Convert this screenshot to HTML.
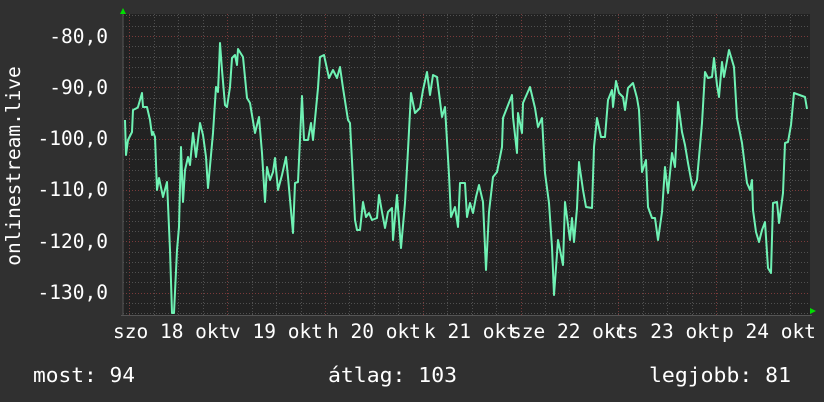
<!DOCTYPE html>
<html><head><meta charset="utf-8"><style>
html,body{margin:0;padding:0;background:#303030;}
svg{display:block;}
text{font-family:"DejaVu Sans Mono","Liberation Mono",monospace;fill:#ffffff;}
</style></head><body>
<svg width="824" height="402" viewBox="0 0 824 402" xmlns="http://www.w3.org/2000/svg">
<rect width="824" height="402" fill="#303030"/>
<rect x="123" y="14" width="687" height="301" fill="#222222"/>
<path stroke="#505050" stroke-width="1" stroke-dasharray="1,2" fill="none" d="
M123 15.5H810 M123 26.5H810 M123 46.5H810 M123 57.5H810 M123 67.5H810 M123 77.5H810
M123 98.5H810 M123 108.5H810 M123 118.5H810 M123 128.5H810
M123 149.5H810 M123 159.5H810 M123 170.5H810 M123 180.5H810
M123 200.5H810 M123 211.5H810 M123 221.5H810 M123 231.5H810
M123 252.5H810 M123 262.5H810 M123 272.5H810 M123 282.5H810
M123 303.5H810 M123 313.5H810
M154.5 14V315 M178.5 14V315 M203.5 14V315
M252.5 14V315 M276.5 14V315 M301.5 14V315
M349.5 14V315 M374.5 14V315 M398.5 14V315
M447.5 14V315 M472.5 14V315 M496.5 14V315
M545.5 14V315 M569.5 14V315 M594.5 14V315
M643.5 14V315 M667.5 14V315 M692.5 14V315
M741.5 14V315 M765.5 14V315 M790.5 14V315"/>
<path stroke="#7a3a3a" stroke-width="1" stroke-dasharray="1,2" fill="none" d="
M123 36.5H810 M123 87.5H810 M123 139.5H810 M123 190.5H810 M123 241.5H810 M123 293.5H810
M129.5 14V315 M227.5 14V315 M325.5 14V315 M423.5 14V315 M521.5 14V315 M618.5 14V315 M716.5 14V315"/>
<line x1="123" y1="12" x2="123" y2="316" stroke="#555" stroke-width="1"/>
<line x1="121" y1="315.5" x2="812" y2="315.5" stroke="#555" stroke-width="1"/>
<polygon points="120,14 126,14 123,8" fill="#00dd00"/>
<polygon points="810,308 810,314 816,311" fill="#00dd00"/>
<polyline fill="none" stroke="#6ff2b4" stroke-width="2" stroke-linejoin="round" points="
125,120 126,155 128,140 132,132 133,110 137,108 138,107 142,93 143,107 147,107 150,120 152,135 153,132 155,137 157,190 159,178 163,197 167,182 170,250 172,313 174,313 177,250 179,227 181,147 183,202 185,170 188,157 190,165 193,133 196,157 200,123 203,135 206,157 208,188 213,133 216,87 218,92 220,43 222,70 225,105 227,107 230,87 232,58 235,55 237,65 238,49 243,57 247,98 250,103 255,133 259,117 262,153 265,202 267,167 270,180 273,172 275,158 278,190 282,175 286,157 288,177 292,222 293,233 295,183 298,182 302,96 304,140 308,140 311,123 313,140 318,88 320,57 324,55 329,78 333,70 337,78 340,67 343,88 348,120 350,123 353,180 355,220 357,230 360,230 363,202 366,217 369,213 372,220 377,218 379,195 382,212 385,228 388,212 392,208 393,240 397,195 401,248 405,203 408,150 411,93 415,113 420,108 423,90 427,72 430,95 433,75 437,77 442,117 445,107 449,175 451,217 455,207 458,227 460,183 465,183 467,217 470,203 473,213 476,197 479,185 483,202 486,270 489,212 493,177 497,172 502,147 503,118 512,95 513,117 517,153 518,113 522,133 523,103 530,87 535,108 538,127 542,118 545,173 549,203 552,247 554,295 558,240 563,265 565,202 570,240 572,218 574,242 577,208 579,162 583,190 586,207 592,208 594,147 597,118 601,137 605,137 608,100 612,90 613,107 616,81 619,93 623,97 625,110 628,88 633,83 637,98 639,110 642,172 646,160 648,207 652,218 655,218 658,240 662,212 665,167 668,193 672,153 675,167 677,127 678,102 682,132 685,145 688,163 693,190 697,180 702,123 705,72 708,78 712,77 714,58 717,85 719,97 722,62 724,77 729,50 734,67 737,118 742,143 747,183 750,190 752,180 753,210 756,232 759,242 762,230 765,222 768,268 771,273 773,203 777,202 779,223 783,193 785,143 788,142 791,125 794,93 805,97 807,109"/>
<g font-size="19.5" text-anchor="end">
<text x="108" y="43">-80,0</text>
<text x="108" y="94">-90,0</text>
<text x="108" y="145">-100,0</text>
<text x="108" y="196">-110,0</text>
<text x="108" y="248">-120,0</text>
<text x="108" y="299">-130,0</text>
</g>
<text font-size="19.5" transform="translate(20,166) rotate(-90)" text-anchor="middle">onlinestream.live</text>
<g font-size="19.5">
<text x="113" y="338">szo 18 okt</text>
<text x="229" y="338">v 19 okt</text>
<text x="327" y="338">h 20 okt</text>
<text x="424" y="338">k 21 okt</text>
<text x="510" y="338">sze 22 okt</text>
<text x="615" y="338">cs 23 okt</text>
<text x="722" y="338">p 24 okt</text>
</g>
<g font-size="20">
<text x="33" y="382" textLength="102" lengthAdjust="spacingAndGlyphs">most: 94</text>
<text x="328" y="382" textLength="129" lengthAdjust="spacingAndGlyphs">átlag: 103</text>
<text x="649" y="382" textLength="142" lengthAdjust="spacingAndGlyphs">legjobb: 81</text>
</g>
</svg>
</body></html>
